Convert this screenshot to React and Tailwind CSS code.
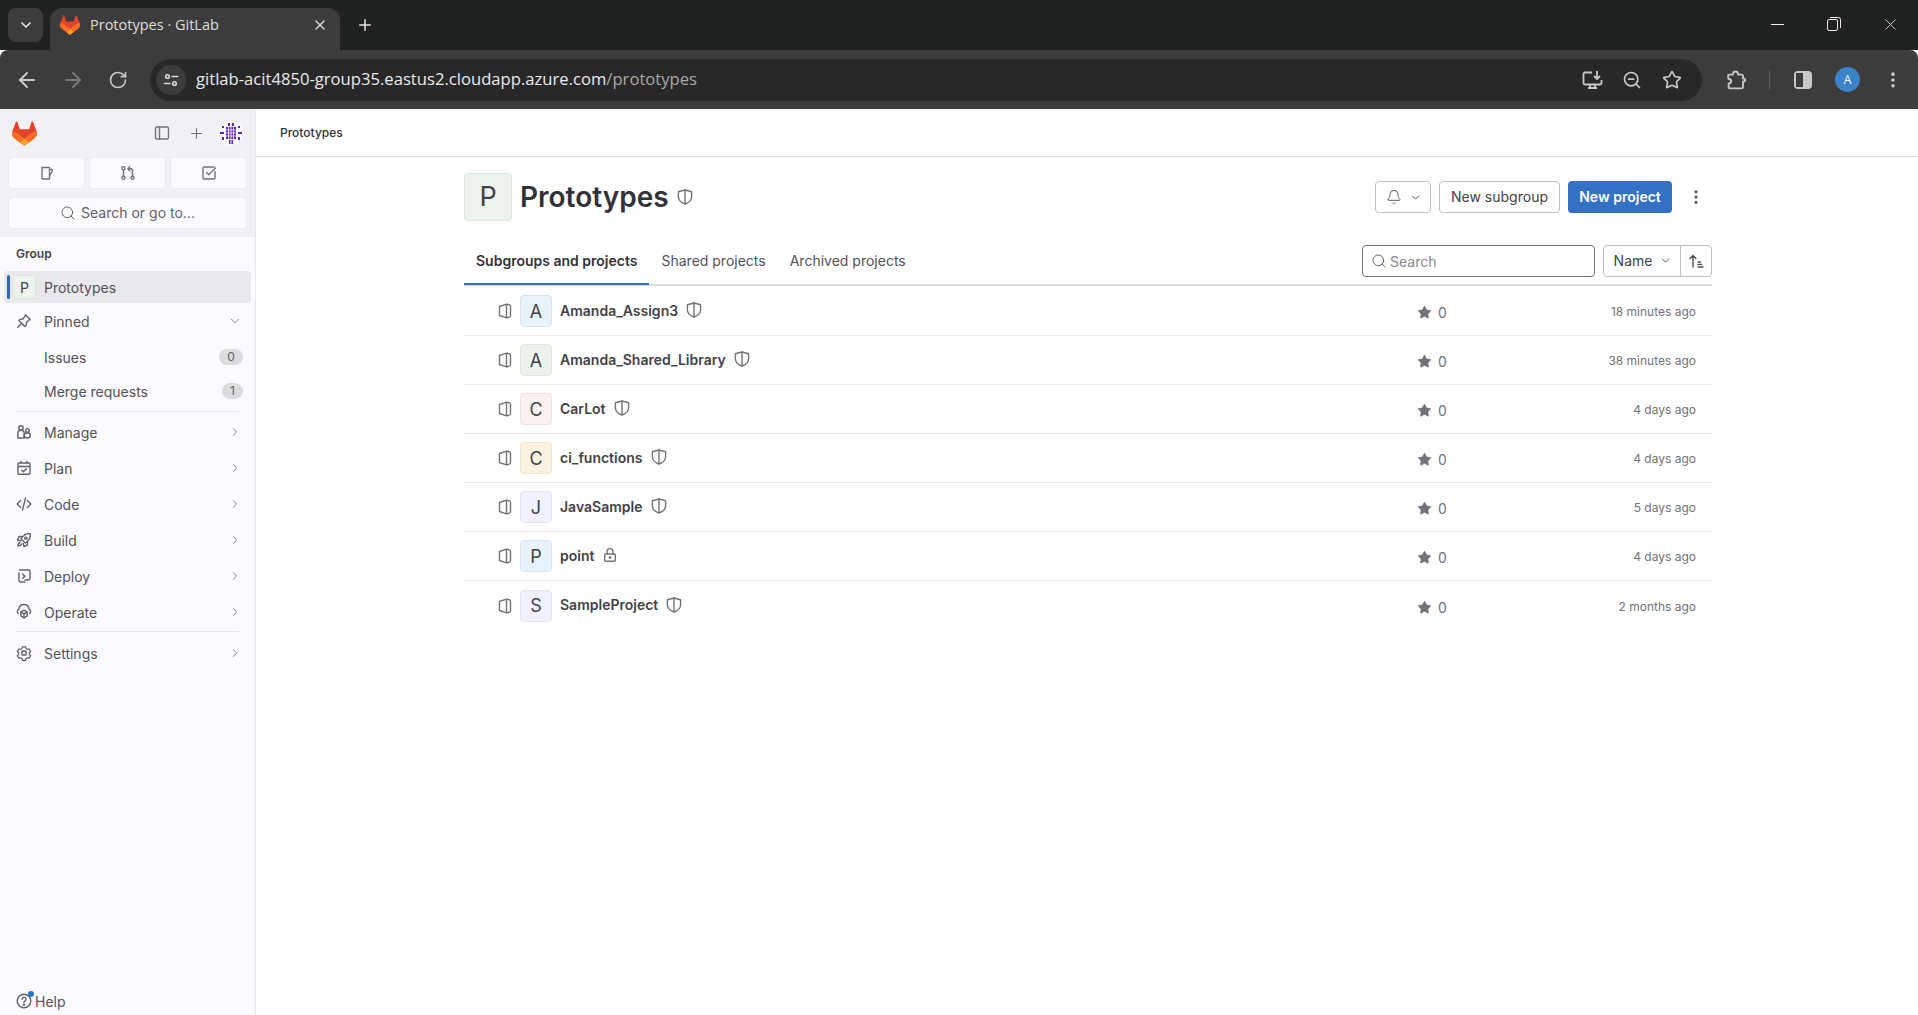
import { ArrowLeft, ArrowRight, Bell, ChevronDown, ChevronRight, EllipsisVertical, Plus, RotateCw, Search, Star, X, ZoomOut } from 'lucide-react';

const inter = "font-['Inter',sans-serif]";

const Tanuki = ({ size = 24 }) => (
    <svg width={size} height={size} viewBox="0 0 25 24" fill="none">
        <path d="m24.507 9.5-.034-.09L21.082.562a.896.896 0 0 0-1.694.091l-2.29 7.01H7.825L5.535.653a.898.898 0 0 0-1.694-.09L.451 9.411.416 9.5a6.297 6.297 0 0 0 2.09 7.278l.012.01.03.022 5.16 3.867 2.56 1.935 1.554 1.176a1.051 1.051 0 0 0 1.268 0l1.555-1.176 2.56-1.935 5.197-3.89.014-.01A6.297 6.297 0 0 0 24.507 9.5Z" fill="#E24329" />
        <path d="m24.507 9.5-.034-.09a11.44 11.44 0 0 0-4.56 2.051l-7.447 5.632 4.742 3.584 5.197-3.89.014-.01A6.297 6.297 0 0 0 24.507 9.5Z" fill="#FC6D26" />
        <path d="m7.707 20.677 2.56 1.935 1.555 1.176a1.051 1.051 0 0 0 1.268 0l1.555-1.176 2.56-1.935-4.743-3.584-4.755 3.584Z" fill="#FCA326" />
        <path d="M5.01 11.461a11.43 11.43 0 0 0-4.56-2.05L.416 9.5a6.297 6.297 0 0 0 2.09 7.278l.012.01.03.022 5.16 3.867 4.745-3.584-7.444-5.632Z" fill="#FC6D26" />
    </svg>
);

// 16px gitlab style outline icon
const Ico = ({ children, className = 'text-[#626168]', size = 16 }) => (
    <svg width={size} height={size} viewBox="0 0 16 16" fill="none" stroke="currentColor" strokeWidth="1.4" strokeLinecap="round" strokeLinejoin="round" className={`shrink-0 ${className}`}>
        {children}
    </svg>
);

const ShieldIcon = () => (
    <Ico className="text-[#737278]">
        <path d="M8 1 14.600 2.700v5c0 3.300-2.900 6-6.600 7.300C4.300 13.700 1.400 11 1.400 7.700v-5L8 1Z" />
        <path d="M8 1v14" />
    </Ico>
);

const ProjectIcon = () => (
    <Ico className="text-[#737278]">
        <path d="M2.500 3.500 9.500 1.200c1.500 0 3.500.8 4 1.800v10c-.5 1-2.500 1.800-4 1.800l-7-2.300V3.500Z" />
        <path d="M9.500 1.500v13" />
    </Ico>
);

const LockIcon = () => (
    <Ico className="text-[#737278]">
        <rect x="2.700" y="7" width="10.600" height="7.300" rx="1" />
        <path d="M5 7V4.600a3 3 0 0 1 6 0V7" />
        <circle cx="8" cy="10.600" r=".7" fill="currentColor" />
    </Ico>
);

const navIcons = {
    pin: <><path d="m9.500 1.800 4.700 4.700-1.400.6-2.400 2.400-.4 3-1.200 1-5.900-5.900 1-1.200 3-.4L9 3.200l.5-1.400Z" /><path d="M5.500 10.500 1.800 14.200" /></>,
    manage: <><circle cx="5" cy="4" r="2.200" /><path d="M1.800 14V9.500a3.200 3.200 0 0 1 6.400 0V14H1.800Z" /><circle cx="11.500" cy="6.400" r="1.800" /><rect x="8.200" y="9" width="6" height="5" rx="2.400" /></>,
    plan: <><rect x="2" y="3" width="12" height="11.300" rx="1" /><path d="M2 6.500h12M5 1.500V3M11 1.500V3" /><path d="m5.800 10.200 1.600 1.600 3-3" /></>,
    code: <><path d="M4.500 4.500 1.200 8l3.300 3.500M11.500 4.500 14.800 8l-3.300 3.500M9.500 2 6.500 14" /></>,
    build: <><path d="M14.300 1.700c.3 3.800-1 6.700-5 9.300L5 6.700c2.600-4 5.500-5.300 9.300-5Z" /><circle cx="9.800" cy="6.200" r="1.100" /><path d="M5.500 4.500H3L1.500 8l3 .8M11.500 10.500V13L8 14.500l-.8-3M4 10.500c-1.500.5-2 2-2 3.500 1.500 0 3-.5 3.500-2" /></>,
    deploy: <><path d="M3.500 2h9A1.500 1.500 0 0 1 14 3.500v7a1.500 1.500 0 0 1-1.500 1.500H9M3 5v7.500A1.500 1.500 0 0 0 4.500 14H9" /><path d="m6.500 6 2.500 2.200-2.500 2.200" /></>,
    operate: <><path d="M2.200 9.500A3 3 0 0 1 3 4.800a5 5 0 0 1 9.900 0 3 3 0 0 1 .9 4.700" /><path d="m8 6.200 3.200 1.900v3.700L8 13.800l-3.200-2V8.100L8 6.200Z" /><path d="M8 9.800v4M4.800 8.100 8 9.800l3.200-1.700" /></>,
    settings: <><path d="M6.300 1.500h3.400l.5 1.900 1.700 1 1.900-.5 1.600 2.800-1.400 1.300v2l1.400 1.300-1.600 2.800-1.900-.5-1.700 1-.5 1.900H6.300l-.5-1.900-1.700-1-1.900.5-1.600-2.800 1.400-1.300v-2L.6 6.700l1.600-2.800 1.900.5 1.700-1 .5-1.900Z" transform="translate(.8 .5) scale(.9)" /><circle cx="8" cy="8" r="2.300" /></>,
};

const navMain = [
    { label: 'Manage', icon: 'manage' },
    { label: 'Plan', icon: 'plan' },
    { label: 'Code', icon: 'code' },
    { label: 'Build', icon: 'build' },
    { label: 'Deploy', icon: 'deploy' },
    { label: 'Operate', icon: 'operate' },
];

const projects = [
    { letter: 'A', name: 'Amanda_Assign3', tone: 'bg-[#e9f3fc] border-[#d5e4f2]', time: '18 minutes ago' },
    { letter: 'A', name: 'Amanda_Shared_Library', tone: 'bg-[#ecf4ee] border-[#dde6df]', time: '38 minutes ago' },
    { letter: 'C', name: 'CarLot', tone: 'bg-[#fbf2ef] border-[#f0e3de]', time: '4 days ago' },
    { letter: 'C', name: 'ci_functions', tone: 'bg-[#faf2e0] border-[#f0e6d0]', time: '4 days ago' },
    { letter: 'J', name: 'JavaSample', tone: 'bg-[#f1f1ff] border-[#e3e3f3]', time: '5 days ago' },
    { letter: 'P', name: 'point', tone: 'bg-[#e9f3fc] border-[#d5e4f2]', time: '4 days ago', locked: true },
    { letter: 'S', name: 'SampleProject', tone: 'bg-[#f1f1ff] border-[#e3e3f3]', time: '2 months ago' },
];

const ChromeBar = () => (
    <div className="shrink-0 font-['Open_Sans',sans-serif]">
        <div className="h-[50px] bg-[#202221] flex items-end pl-2">
            <div className="w-[35px] h-[34px] mb-2 rounded-lg bg-[#3c3c3c] flex items-center justify-center text-[#e3e3e3]">
                <ChevronDown size={16} strokeWidth={2.500} />
            </div>
            <div className="ml-[7px] w-[290px] h-[42px] pb-2 rounded-t-xl bg-[#3c3c3c] flex items-center pl-[10px] text-[#dcdcdc]">
                <Tanuki size={20} />
                <span className="ml-[10px] text-[14.500px] leading-none">Prototypes · GitLab</span>
                <X size={16} strokeWidth={2.200} className="ml-auto mr-3 text-[#d8d8d8]" />
            </div>
            <Plus size={18} strokeWidth={2} className="ml-4 mb-[16px] text-[#e3e3e3]" />
            <div className="ml-auto flex items-center h-full text-[#e8e8e8] pb-[2px]">
                <div className="w-[55px] flex justify-center"><span className="block w-[13px] h-px bg-[#eee]" /></div>
                <div className="w-[58px] flex justify-center">
                    <svg width="14" height="14" viewBox="0 0 14 14" fill="none" stroke="currentColor"><rect x=".5" y="2.500" width="10" height="11" rx="1.500" /><path d="M3 .5h8.500A2 2 0 0 1 13.500 2.500V11" /></svg>
                </div>
                <div className="w-[55px] flex justify-center"><X size={19} strokeWidth={1} /></div>
            </div>
        </div>
        <div className="h-[59px] bg-[#3c3c3c] rounded-t-lg flex items-center text-[#c7c7c7]">
            <div className="w-[45px] flex justify-end"><ArrowLeft size={24} strokeWidth={2} className="mr-[6px]" /></div>
            <div className="w-[55px] flex justify-center"><ArrowRight size={24} strokeWidth={2} className="text-[#777]" /></div>
            <div className="w-[36px] flex justify-center"><RotateCw size={20} strokeWidth={2} /></div>
            <div className="ml-[14px] w-[1552px] h-[42px] rounded-full bg-[#282828] flex items-center pl-[6px]">
                <div className="w-[30px] h-[30px] rounded-full bg-[#3c3c3c] flex items-center justify-center">
                    <svg width="16" height="16" viewBox="0 0 16 16" fill="none" stroke="#d8d8d8" strokeWidth="1.600" strokeLinecap="round"><circle cx="4.500" cy="4.500" r="1.800" /><path d="M9 4.500h5.500M1.500 11.500H7" /><circle cx="11.500" cy="11.500" r="1.800" /></svg>
                </div>
                <span className="ml-[10px] text-[16.640px] leading-none text-[#e8eaed]">gitlab-acit4850-group35.eastus2.cloudapp.azure.com<span className="text-[#a8a8a8]">/prototypes</span></span>
                <div className="ml-auto flex items-center pr-[10px]">
                    <div className="w-10 flex justify-center">
                        <svg width="21" height="20" viewBox="0 0 21 20" fill="none" stroke="currentColor" strokeWidth="1.800" strokeLinejoin="round"><path d="M10 2.500H3A1.500 1.500 0 0 0 1.500 4v9A1.500 1.500 0 0 0 3 14.500h15a1.500 1.500 0 0 0 1.500-1.500v-3" /><path d="M6 18h9M8 15v3M13 15v3M15 1v8M12 6l3 3 3-3" /></svg>
                    </div>
                    <div className="w-10 flex justify-center"><ZoomOut size={20} strokeWidth={2} /></div>
                    <div className="w-10 flex justify-center"><Star size={20} strokeWidth={2} /></div>
                </div>
            </div>
            <div className="ml-[14px] w-[40px] flex justify-center">
                <svg width="20" height="20" viewBox="0 0 20 20" fill="none" stroke="currentColor" strokeWidth="1.900" strokeLinejoin="round"><path d="M2 6c0-.8.6-1.400 1.400-1.400H7C7 2.500 8 1.500 9.500 1.500S12 2.500 12 4.600h3.600c.8 0 1.400.6 1.400 1.400v2.500c1.500 0 2.200 .7 2.200 1.500s-.7 1.500-2.200 1.500V17c0 .8-.6 1.400-1.400 1.400H4c-.8 0-1.400-.6-1.400-1.400v-3.500c1.800 0 2.600-1 2.600-2.200S4 9 2.600 9L2 6Z" /></svg>
            </div>
            <div className="ml-[13px] w-px h-5 bg-[#5f5f5f]" />
            <div className="ml-6 w-[18px] h-[18px] rounded-sm bg-[#c7c7c7] flex p-[2px] pr-[9px]"><span className="block w-full bg-[#3c3c3c]" /></div>
            <div className="ml-[23px] w-[25px] h-[25px] rounded-full bg-[#3b82c9] text-white text-[12px] flex items-center justify-center">A</div>
            <EllipsisVertical size={20} strokeWidth={2.400} className="ml-[23px]" />
        </div>
    </div>
);

const Sidebar = () => (
    <aside className={`w-[256px] shrink-0 bg-[#fbfafd] border-r border-[#e9e9ec] flex flex-col text-[14px] text-[#535158] ${inter}`}>
        <div className="h-[128px] shrink-0 bg-[#f1f1f4] px-[9px] pt-[12px]">
            <div className="h-[24px] flex items-center">
                <div className="ml-[3px]"><Tanuki size={25} /></div>
                <Ico className="ml-auto text-[#737278]"><rect x="1.500" y="2" width="13" height="12" rx="1.500" /><path d="M5.500 2v12" /></Ico>
                <Plus size={17} strokeWidth={1.500} className="ml-[18px] text-[#737278]" />
                <svg width="24" height="24" viewBox="0 0 24 24" className="ml-[14px] mr-[3px] text-[#5b21b6]" fill="currentColor">
                    <circle cx="12" cy="12" r="12" fill="#fbfafd" />
                    <path d="M7 6h10v12H7zM3 5h2v2H3zM19 5h2v2h-2zM1 11h4v2H1zM19 11h4v2h-4zM3 16h2v3H3zM19 16h2v3h-2zM9 2h2v3H9zM13 2h2v3h-2zM10 19h1.500v4H10zM12.500 19H14v4h-1.500z" />
                    <path d="M9.500 6v12M12 6v12M14.500 6v12M7 9h10M7 12h10M7 15h10" stroke="#fff" strokeWidth=".8" />
                </svg>
            </div>
            <div className="mt-[13px] flex gap-[6px]">
                <div className="flex-1 h-[30px] rounded bg-[#fbfafd] shadow-[0_0_0_1px_#ebebef] flex items-center justify-center">
                    <Ico className="text-[#737278]"><path d="M3 2.500h7.500V14H4a1 1 0 0 1-1-1V2.500ZM10.500 4.500h1.800c1 0 1.400.8 1.100 1.500l-2.900 5" /></Ico>
                </div>
                <div className="flex-1 h-[30px] rounded bg-[#fbfafd] shadow-[0_0_0_1px_#ebebef] flex items-center justify-center">
                    <Ico className="text-[#737278]"><circle cx="3.500" cy="3.200" r="1.600" /><circle cx="3.500" cy="12.800" r="1.600" /><circle cx="12.500" cy="12.800" r="1.600" /><path d="M3.500 5v6M12.500 11V5.500c0-1-.6-1.800-1.800-1.800H8M9.800 1.500 7.800 3.700l2 2.200" /></Ico>
                </div>
                <div className="flex-1 h-[30px] rounded bg-[#fbfafd] shadow-[0_0_0_1px_#ebebef] flex items-center justify-center">
                    <Ico className="text-[#737278]"><path d="M14 6.500V13a1 1 0 0 1-1 1H3a1 1 0 0 1-1-1V3a1 1 0 0 1 1-1h10" /><path d="m5.500 7.500 2.300 2.300L14.500 3" /></Ico>
                </div>
            </div>
            <div className="mt-[10px] h-[30px] rounded bg-[#fbfafd] shadow-[0_0_0_1px_#ebebef] flex items-center justify-center gap-[5px]">
                <Search size={16} strokeWidth={1.500} className="text-[#626168]" />
                <span className="text-[14px] text-[#626168] -mt-px">Search or go to...</span>
            </div>
        </div>

        <div className="px-1 flex-1 flex flex-col">
            <div className="h-[34px] pl-3 pt-[9px] text-[12px] leading-4 font-semibold text-[#434248]">Group</div>
            <div className="h-[32px] rounded bg-[#e9e9ec] flex items-center">
                <span className="ml-[3px] w-[3px] h-[24px] rounded-sm bg-[#2f68b4]" />
                <span className="ml-[3px] w-[23px] h-[24px] rounded border border-[#dde6df] bg-[#ecf4ee] text-[#434248] flex items-center justify-center text-[14px]">P</span>
                <span className="ml-[8px]">Prototypes</span>
            </div>
            <div className="mt-[2px] h-[32px] flex items-center pl-3 pr-[9px]">
                <Ico className="w-4 text-[#626168]">{navIcons.pin}</Ico>
                <span className="ml-3">Pinned</span>
                <ChevronDown size={14} strokeWidth={1.500} className="ml-auto text-[#737278]" />
            </div>
            <div className="mt-[4px] h-[32px] flex items-center pl-10 pr-[8px]">
                <span>Issues</span>
                <span className="ml-auto h-[16px] w-[24px] rounded-full bg-[#dcdcde] text-[12px] text-[#626168] flex items-center justify-center">0</span>
            </div>
            <div className="mt-[2px] h-[32px] flex items-center pl-10 pr-[8px]">
                <span>Merge requests</span>
                <span className="ml-auto h-[16px] w-[21px] rounded-full bg-[#dcdcde] text-[12px] text-[#626168] flex items-center justify-center">1</span>
            </div>
            <div className="mx-3 mt-[4px] h-px bg-[#e6e6e9]" />
            <div className="mt-[4px] flex flex-col gap-[4px]">
                {navMain.map((item) => (
                    <div key={item.label} className="h-[32px] flex items-center pl-3 pr-[9px]">
                        <Ico>{navIcons[item.icon]}</Ico>
                        <span className="ml-3">{item.label}</span>
                        <ChevronRight size={14} strokeWidth={1.500} className="ml-auto text-[#737278]" />
                    </div>
                ))}
            </div>
            <div className="mx-3 mt-[3px] h-px bg-[#e6e6e9]" />
            <div className="mt-[5px] h-[32px] flex items-center pl-3 pr-[9px]">
                <Ico>{navIcons.settings}</Ico>
                <span className="ml-3">Settings</span>
                <ChevronRight size={14} strokeWidth={1.500} className="ml-auto text-[#737278]" />
            </div>
            <div className="mt-auto h-[28px] flex items-center pl-3">
                <div className="relative">
                    <Ico><circle cx="8" cy="8" r="6.800" /><path d="M6 6.200a2 2 0 1 1 3 1.700c-.7.400-1 .8-1 1.500" /><circle cx="8" cy="11.700" r=".5" fill="currentColor" /></Ico>
                    <span className="absolute -top-[2px] -right-[2px] w-[6px] h-[6px] rounded-full bg-[#1f75cb]" />
                </div>
                <span className="ml-[3px]">Help</span>
            </div>
        </div>
    </aside>
);

const ProjectRow = ({ project }) => (
    <div className="h-[49px] border-b border-[#ececef] last:border-b-0 flex items-center pl-[33px] pr-4">
        <ProjectIcon />
        <div className={`ml-[7px] w-[32px] h-[32px] rounded border flex items-center justify-center text-[18px] text-[#434248] ${project.tone}`}>
            {project.letter}
        </div>
        <span className="ml-2 text-[14px] font-semibold text-[#434248] -mt-[2px]">{project.name}</span>
        <span className="ml-2 -mt-[2px]">{project.locked ? <LockIcon /> : <ShieldIcon />}</span>
        <div className="ml-auto w-[80px] flex items-center text-[14px] text-[#737278] mt-[3px]">
            <Star size={15} fill="currentColor" strokeWidth={1} />
            <span className="ml-[6px]">0</span>
        </div>
        <div className="w-[199px] text-right text-[12px] text-[#737278] mt-[2px]">{project.time}</div>
    </div>
);

const Main = () => (
    <main className={`flex-1 min-w-0 bg-white text-[#434248] ${inter}`}>
        <div className="h-[48px] border-b border-[#dcdcde] px-6 flex items-center text-[12px] font-medium text-[#333238]">Prototypes</div>
        <div className="ml-[208px] w-[1248px]">
            <div className="mt-[16px] h-[48px] flex items-center">
                <div className="w-[48px] h-[48px] rounded border border-[#dde6df] bg-[#ecf4ee] text-[#434248] text-[27px] flex items-center justify-center">P</div>
                <h1 className="ml-2 text-[28px] font-semibold leading-none text-[#333238]">Prototypes</h1>
                <span className="ml-2"><ShieldIcon /></span>
                <div className="ml-auto flex items-center text-[14px] text-[#434248]">
                    <div className="w-[56px] h-[32px] pl-[2px] rounded border border-[#bfbfc3] flex items-center justify-center gap-[7px]">
                        <Bell size={16} strokeWidth={1.400} className="text-[#535158]" />
                        <ChevronDown size={13} strokeWidth={1.800} className="text-[#535158]" />
                    </div>
                    <div className="ml-2 w-[121px] h-[32px] pb-px rounded border border-[#bfbfc3] flex items-center justify-center">New subgroup</div>
                    <div className="ml-2 w-[104px] h-[32px] pb-px rounded bg-[#3470c4] text-white font-semibold flex items-center justify-center">New project</div>
                    <EllipsisVertical size={18} strokeWidth={2.200} className="ml-[15px] mr-[7px] text-[#535158]" />
                </div>
            </div>
            <div className="mt-[16px] h-[49px] border-b-2 border-[#dcdcde] flex items-start">
                <div className="h-[48px] px-3 border-b-2 border-[#3470c4] flex items-center text-[14px] font-semibold text-[#333238]">Subgroups and projects</div>
                <div className="h-[48px] px-3 pb-px flex items-center text-[14px] text-[#535158]">Shared projects</div>
                <div className="h-[48px] px-3 pb-px flex items-center text-[14px] text-[#535158]">Archived projects</div>
                <div className="ml-auto mt-2 flex items-center text-[14px]">
                    <div className="w-[233px] h-[32px] rounded border border-[#737278] flex items-center pl-[8px]">
                        <Search size={16} strokeWidth={1.500} className="text-[#626168]" />
                        <span className="ml-[3px] text-[#89888d]">Search</span>
                    </div>
                    <div className="ml-2 w-[78px] h-[32px] pb-px pl-[2px] rounded-l border border-[#bfbfc3] flex items-center justify-center gap-[7px] text-[#434248]">
                        Name
                        <ChevronDown size={13} strokeWidth={1.800} className="text-[#535158]" />
                    </div>
                    <div className="w-[32px] h-[32px] -ml-px rounded-r border border-[#bfbfc3] flex items-center justify-center">
                        <Ico className="text-[#535158]"><path d="M5 14V2.500M2 5.500l3-3 3 3M10 9h2.500M10 11.500h3.500M10 14h5" /></Ico>
                    </div>
                </div>
            </div>
            <div className="mt-px">
                {projects.map((project) => (
                    <ProjectRow key={project.name} project={project} />
                ))}
            </div>
        </div>
    </main>
);

const App = () => (
    <div className="h-screen overflow-hidden flex flex-col bg-white">
        <ChromeBar />
        <div className="flex-1 min-h-0 flex">
            <Sidebar />
            <Main />
        </div>
    </div>
);

export default App;
